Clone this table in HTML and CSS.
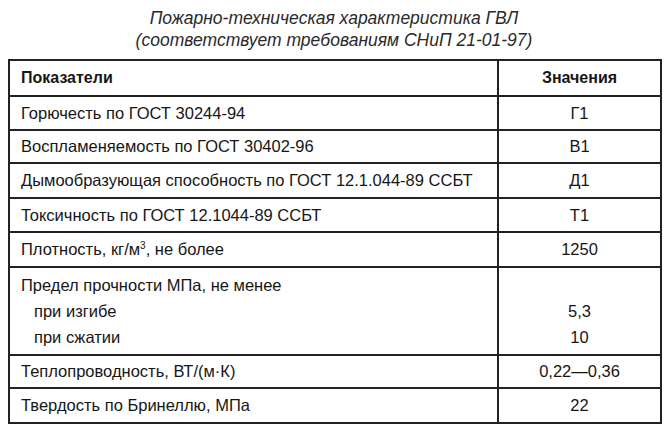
FILE: index.html
```html
<!DOCTYPE html>
<html lang="ru">
<head>
<meta charset="utf-8">
<link rel="stylesheet" href="styles.css">
</head>
<body>
<div class="page">
  <div class="title">
    <div>Пожарно-техническая характеристика ГВЛ</div>
    <div>(соответствует требованиям СНиП 21-01-97)</div>
  </div>
  <table class="spec">
    <colgroup><col class="c1"><col class="c2"></colgroup>
    <tr class="head"><th class="name">Показатели</th><th class="val">Значения</th></tr>
    <tr class="r34"><td class="name">Горючесть по ГОСТ 30244-94</td><td class="val">Г1</td></tr>
    <tr class="r33"><td class="name">Воспламеняемость по ГОСТ 30402-96</td><td class="val">В1</td></tr>
    <tr class="r35"><td class="name">Дымообразующая способность по ГОСТ 12.1.044-89 ССБТ</td><td class="val">Д1</td></tr>
    <tr class="r34"><td class="name">Токсичность по ГОСТ 12.1044-89 ССБТ</td><td class="val">Т1</td></tr>
    <tr class="r35"><td class="name">Плотность, кг/м<sup>3</sup>, не более</td><td class="val">1250</td></tr>
    <tr class="multi">
      <td class="name"><div>Предел прочности МПа, не менее</div><div class="sub">при изгибе</div><div class="sub">при сжатии</div></td>
      <td class="val"><div>&nbsp;</div><div>5,3</div><div>10</div></td>
    </tr>
    <tr class="r33"><td class="name">Теплопроводность, ВТ/(м·К)</td><td class="val">0,22—0,36</td></tr>
    <tr class="r35"><td class="name">Твердость по Бринеллю, МПа</td><td class="val">22</td></tr>
  </table>
</div>
</body>
</html>
```
FILE: styles.css
```css
html, body {
  margin: 0;
  background: #ffffff;
}
.page {
  width: 670px;
  height: 430px;
  padding: 7px 0 0 8px;
  box-sizing: border-box;
  font-family: "Liberation Sans", Arial, sans-serif;
  color: #161616;
}
.title {
  width: 652px;
  text-align: center;
  font-style: italic;
  font-size: 17.5px;
  line-height: 22px;
  color: #2a2a2a;
}
.spec {
  margin-top: 8px;
  width: 652px;
  border-collapse: collapse;
  table-layout: fixed;
  font-size: 16.5px;
}
.c1 { width: 489px; }
.c2 { width: 163px; }
.spec th, .spec td {
  border: 2px solid #222;
  padding: 0 0 0 11px;
  vertical-align: middle;
  font-weight: normal;
  text-align: left;
}
.spec .val {
  text-align: center;
  padding: 0;
}
.spec th {
  font-weight: bold;
  font-size: 16px;
  height: 34px;
}
.r33 td { height: 31px; }
.r34 td { height: 32px; }
.r35 td { height: 33px; }
.multi td {
  height: 86px;
  line-height: 26px;
  padding-top: 0;
}
.multi .sub { padding-left: 13px; }
sup {
  font-size: 10px;
  line-height: 0;
  vertical-align: 6px;
}
```
